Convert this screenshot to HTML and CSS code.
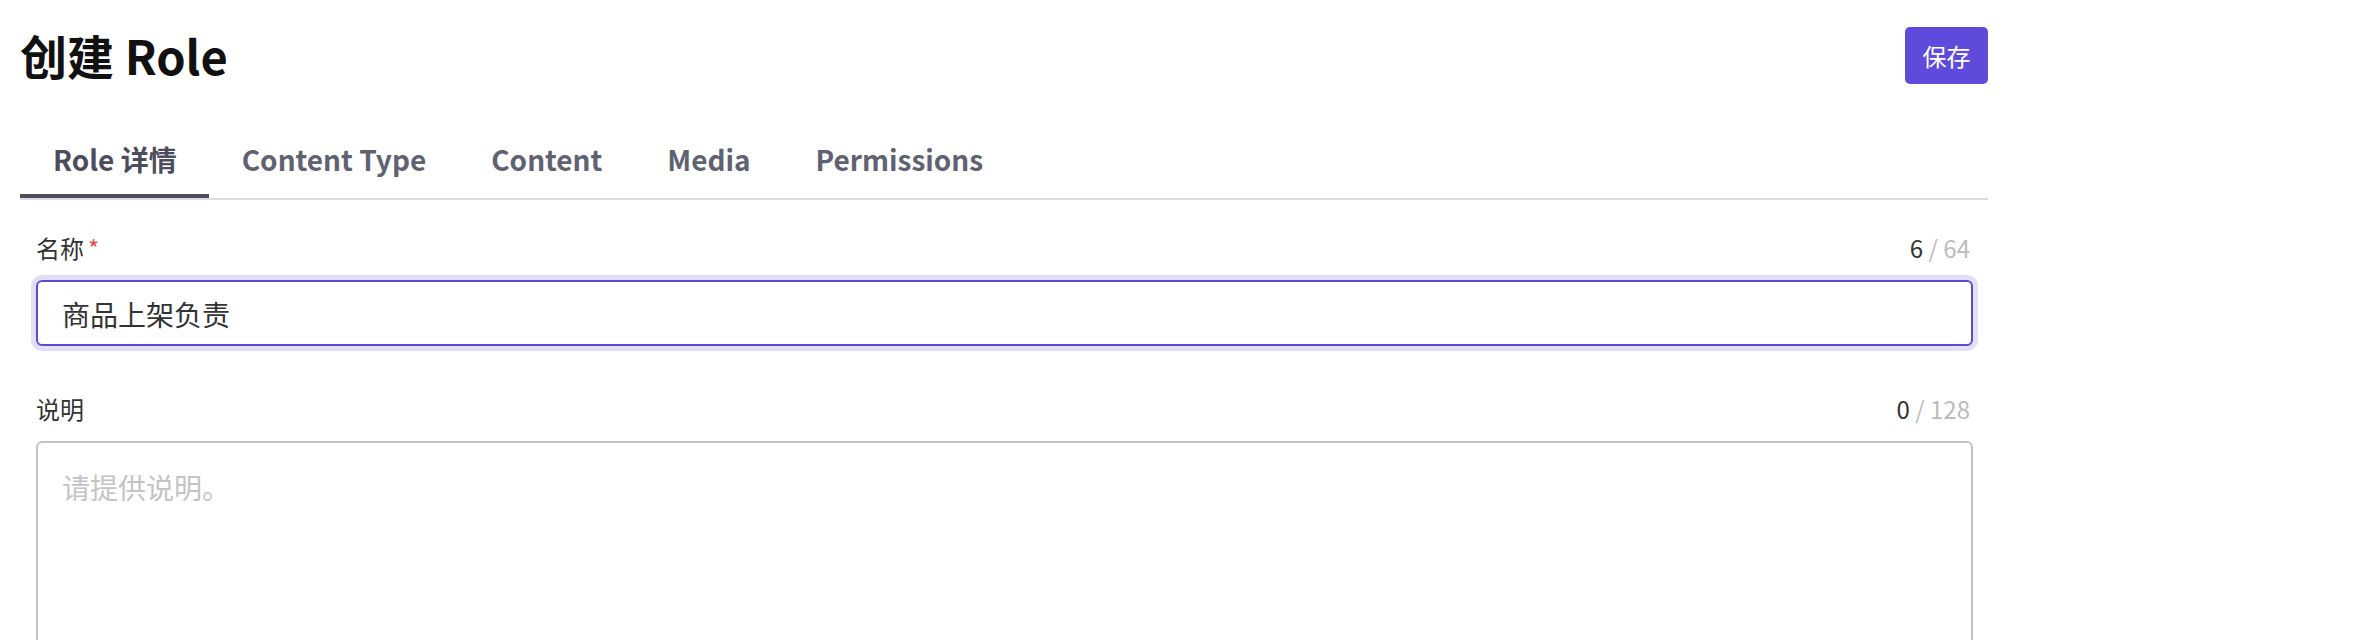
FILE: index.html
```html
<!DOCTYPE html>
<html lang="zh-CN">
<head>
    <meta charset="UTF-8">
    <meta name="viewport" content="width=device-width, initial-scale=1.0">
    <title>创建 Role</title>
    <link rel="stylesheet" href="styles.css">
</head>
<body>
    <div class="page">
        <div class="header">
            <h1 class="title">创建 Role</h1>
            <button class="btn-save">保存</button>
        </div>

        <div class="tabs">
            <div class="tab active">Role 详情</div>
            <div class="tab">Content Type</div>
            <div class="tab">Content</div>
            <div class="tab">Media</div>
            <div class="tab">Permissions</div>
        </div>

        <div class="form">
            <div class="field">
                <div class="field-head">
                    <label class="label">名称<span class="required">*</span></label>
                    <span class="counter"><b>6</b> / 64</span>
                </div>
                <div class="input focused">商品上架负责</div>
            </div>

            <div class="field">
                <div class="field-head">
                    <label class="label">说明</label>
                    <span class="counter"><b>0</b> / 128</span>
                </div>
                <div class="textarea"><span class="placeholder">请提供说明。</span></div>
            </div>
        </div>
    </div>
</body>
</html>
```

FILE: styles.css
```css
body {
    margin: 0;
    background: #fff;
    font-family: "Noto Sans CJK SC", "Noto Sans", sans-serif;
    color: #333;
}

.page {
    width: 1968px;
    padding-left: 20px;
}

/* header */
.header {
    display: flex;
    justify-content: space-between;
    align-items: center;
    padding-top: 27px;
    height: 57px;
}

.title {
    margin: 0;
    font-size: 47px;
    font-weight: 700;
    line-height: 1.2;
    color: #111;
}

.btn-save {
    width: 83px;
    height: 57px;
    border: none;
    border-radius: 5px;
    background: #5f4bdb;
    color: #fff;
    font-family: inherit;
    font-size: 24px;
    padding: 0;
}

/* tabs */
.tabs {
    display: flex;
    margin-top: 54px;
    border-bottom: 2px solid #dcdde0;
}

.tab {
    padding: 0 32px 14px 33px;
    font-size: 28px;
    font-weight: 700;
    line-height: 1.5;
    color: #5e6271;
    border-bottom: 4px solid transparent;
}

.tab.active {
    color: #4b4d5c;
    border-bottom-color: #4b4d5c;
}

/* form */
.form {
    padding: 30px 15px 0 16px;
}

.field {
    margin-bottom: 45px;
}

.field-head {
    display: flex;
    justify-content: space-between;
    align-items: center;
    margin-bottom: 14px;
    font-size: 24px;
    line-height: 1.5;
}

.label {
    color: #333;
}

.required {
    color: #e5484d;
    margin-left: 4px;
}

.counter {
    color: #bcbcbc;
    padding-right: 3px;
}

.counter b {
    font-weight: 400;
    color: #333;
}

.input,
.textarea {
    border: 2px solid #c2c2c2;
    border-radius: 6px;
    font-size: 28px;
    line-height: 1.5;
}

.input {
    padding: 11px 24px 9px;
    color: #333;
}

.input.focused {
    border-color: #5b4bd0;
    box-shadow: 0 0 0 5px #e2dff8;
}

.textarea {
    height: 240px;
    padding: 23px 24px;
}

.placeholder {
    color: #c4c4c4;
}
```
